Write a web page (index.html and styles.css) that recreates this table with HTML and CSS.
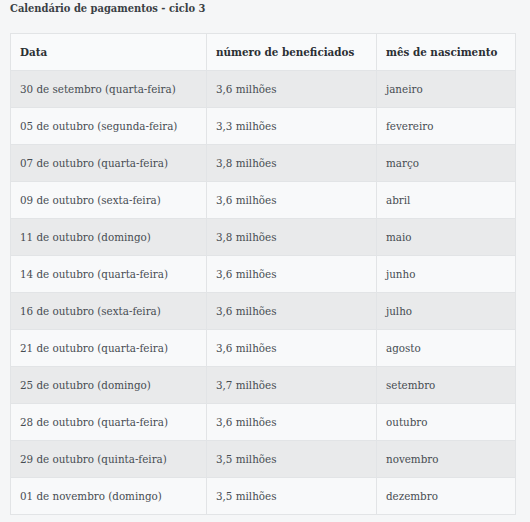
FILE: index.html
```html
<!DOCTYPE html>
<html lang="pt">
<head>
<meta charset="utf-8">
<link rel="stylesheet" href="styles.css">
</head>
<body>
<h2 class="title">Calendário de pagamentos - ciclo 3</h2>
<table class="cal">
  <thead>
    <tr><th class="c1">Data</th><th class="c2">número de beneficiados</th><th class="c3">mês de nascimento</th></tr>
  </thead>
  <tbody>
    <tr><td>30 de setembro (quarta-feira)</td><td>3,6 milhões</td><td>janeiro</td></tr>
    <tr><td>05 de outubro (segunda-feira)</td><td>3,3 milhões</td><td>fevereiro</td></tr>
    <tr><td>07 de outubro (quarta-feira)</td><td>3,8 milhões</td><td>março</td></tr>
    <tr><td>09 de outubro (sexta-feira)</td><td>3,6 milhões</td><td>abril</td></tr>
    <tr><td>11 de outubro (domingo)</td><td>3,8 milhões</td><td>maio</td></tr>
    <tr><td>14 de outubro (quarta-feira)</td><td>3,6 milhões</td><td>junho</td></tr>
    <tr><td>16 de outubro (sexta-feira)</td><td>3,6 milhões</td><td>julho</td></tr>
    <tr><td>21 de outubro (quarta-feira)</td><td>3,6 milhões</td><td>agosto</td></tr>
    <tr><td>25 de outubro (domingo)</td><td>3,7 milhões</td><td>setembro</td></tr>
    <tr><td>28 de outubro (quarta-feira)</td><td>3,6 milhões</td><td>outubro</td></tr>
    <tr><td>29 de outubro (quinta-feira)</td><td>3,5 milhões</td><td>novembro</td></tr>
    <tr><td>01 de novembro (domingo)</td><td>3,5 milhões</td><td>dezembro</td></tr>
  </tbody>
</table>
</body>
</html>
```
FILE: styles.css
```css
html, body {
  margin: 0;
  padding: 0;
  background: #f5f6f7;
}
body {
  padding: 0 10px;
  font-family: "DejaVu Serif", "Liberation Serif", serif;
  font-stretch: condensed;
  color: #474c52;
}
.title {
  margin: 0;
  padding-top: 2px;
  height: 31px;
  font-size: 11px;
  font-weight: bold;
  color: #3a3f45;
}
.cal {
  width: 506px;
  border-collapse: collapse;
  font-size: 11.5px;
}
.cal th, .cal td {
  border: 1px solid #e2e4e6;
  height: 37px;
  padding: 0 9px;
  text-align: left;
  vertical-align: middle;
  white-space: nowrap;
  box-sizing: border-box;
}
.cal th {
  font-weight: bold;
  color: #2b2f33;
  background: #f9fafb;
}
.c1 { width: 196px; }
.c2 { width: 170px; }
.cal tbody tr:nth-child(odd) td { background: #e9eaeb; }
.cal tbody tr:nth-child(even) td { background: #f8f9fa; }
```
